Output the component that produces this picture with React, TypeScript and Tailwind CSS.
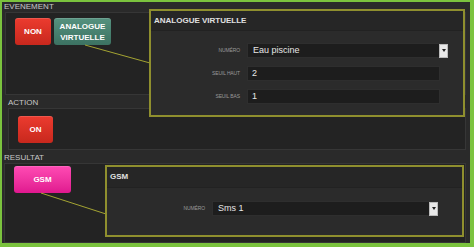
import React from 'react';

const font = { fontFamily: '"Liberation Sans", Arial, sans-serif' };

function Select({ value, width }: { value: string; width: string }) {
  return (
    <div className={`flex items-center h-[15px] bg-[#1d1d1d] border border-[#2e2e2e] ${width}`}>
      <span className="flex-1 pl-[5px] text-[9px] text-[#e6e6e6] leading-none">{value}</span>
      <span className="flex items-center justify-center w-[9px] h-[14px] bg-[#e9e9e9] border border-[#bbb] mr-[-1px]">
        <span className="w-0 h-0 border-l-[2px] border-r-[2px] border-t-[3px] border-l-transparent border-r-transparent border-t-[#222]" />
      </span>
    </div>
  );
}

function Input({ value }: { value: string }) {
  return (
    <div className="flex items-center h-[15px] w-[193px] bg-[#1d1d1d] border border-[#2e2e2e]">
      <span className="pl-[4px] text-[9px] text-[#e6e6e6] leading-none">{value}</span>
    </div>
  );
}

function Row({ label, labelW, children }: { label: string; labelW: string; children: React.ReactNode }) {
  return (
    <div className="flex items-center">
      <span className={`${labelW} pr-[7px] text-right text-[5px] text-[#9a9a9a] tracking-tight`}>{label}</span>
      {children}
    </div>
  );
}

function Btn({ children, cls }: { children: React.ReactNode; cls: string }) {
  return (
    <div className={`flex items-center justify-center h-[27px] rounded-[3px] text-white font-bold text-[8px] leading-[11px] text-center shadow-[inset_0_1px_0_rgba(255,255,255,0.15)] ${cls}`}>
      {children}
    </div>
  );
}

export default function App() {
  return (
    <div className="relative w-[474px] h-[247px] bg-[#7bc33e] pl-[2px] pt-[2px] pr-[4px] pb-[4px]" style={font}>
      <div className="flex flex-col h-full bg-[#2a2a2a] pr-[4px]">
        {/* Evenement */}
        <div className="h-[10px] pl-[2px] text-[8px] leading-[10px] text-[#c8c8c8]">EVENEMENT</div>
        <div className="h-[83px] ml-[3px] bg-[#232323] border border-[#363636] flex gap-[3px] pl-[9px] pt-[5px]">
          <Btn cls="w-[36px] bg-gradient-to-b from-[#ec3b2f] to-[#c8281d]">NON</Btn>
          <Btn cls="w-[57px] bg-gradient-to-b from-[#55927f] to-[#3c7262]">ANALOGUE<br />VIRTUELLE</Btn>
        </div>

        {/* Action */}
        <div className="h-[13px] pl-[6px] pt-[2px] text-[8px] leading-[11px] text-[#c8c8c8]">ACTION</div>
        <div className="h-[42px] ml-[6px] bg-[#232323] border border-[#363636] pl-[9px] pt-[7px]">
          <Btn cls="w-[35px] bg-gradient-to-b from-[#ec3b2f] to-[#c8281d]">ON</Btn>
        </div>

        {/* Resultat */}
        <div className="h-[13px] pl-[2px] pt-[2px] text-[8px] leading-[11px] text-[#c8c8c8]">RESULTAT</div>
        <div className="flex-1 ml-[2px] bg-[#232323] border border-[#363636] pl-[9px] pt-[2px]">
          <Btn cls="w-[57px] bg-gradient-to-b from-[#ff4ab4] to-[#e0178f]">GSM</Btn>
        </div>
      </div>

      {/* connector lines */}
      <svg className="absolute inset-0 pointer-events-none" width="474" height="247">
        <line x1="85" y1="45" x2="150" y2="63" stroke="#a3a332" strokeWidth="1" />
        <line x1="41" y1="193" x2="106" y2="214" stroke="#a3a332" strokeWidth="1" />
      </svg>

      {/* Analogue virtuelle popup */}
      <div className="absolute left-[149px] top-[9px] w-[316px] h-[108px] border-2 border-[#8f8f2e] bg-[#2b2b2b] flex flex-col">
        <div className="h-[20px] flex items-center pl-[3px] bg-[#262626] border-b border-[#222] text-[8px] font-bold text-[#e0e0e0]">
          ANALOGUE VIRTUELLE
        </div>
        <div className="flex flex-col gap-[8px] pt-[12px]">
          <Row label="NUMÉRO" labelW="w-[96px]"><Select value="Eau piscine" width="w-[201px]" /></Row>
          <Row label="SEUIL HAUT" labelW="w-[96px]"><Input value="2" /></Row>
          <Row label="SEUIL BAS" labelW="w-[96px]"><Input value="1" /></Row>
        </div>
      </div>

      {/* GSM popup */}
      <div className="absolute left-[105px] top-[165px] w-[359px] h-[72px] border-2 border-[#8f8f2e] bg-[#2b2b2b] flex flex-col">
        <div className="h-[21px] flex items-center pl-[3px] bg-[#262626] border-b border-[#222] text-[8px] font-bold text-[#e0e0e0]">
          GSM
        </div>
        <div className="pt-[13px]">
          <Row label="NUMÉRO" labelW="w-[105px]"><Select value="Sms 1" width="w-[226px]" /></Row>
        </div>
      </div>
    </div>
  );
}
